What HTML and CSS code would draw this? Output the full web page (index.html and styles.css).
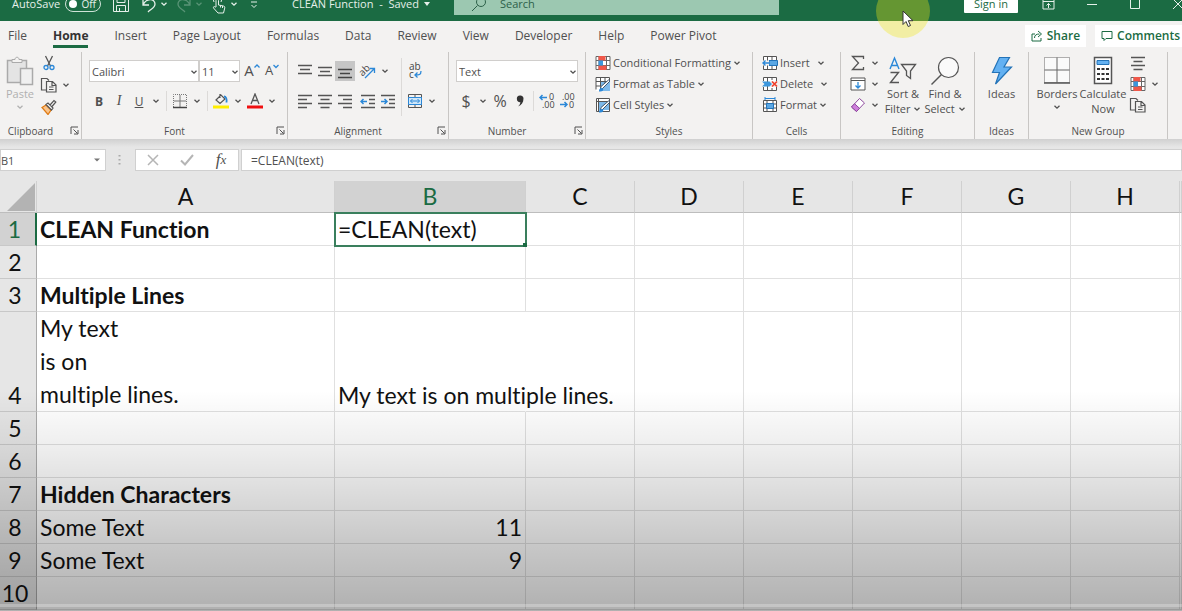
FILE: index.html
```html
<!DOCTYPE html>
<html lang="en">
<head>
  <meta charset="UTF-8">
  <meta name="viewport" content="width=device-width, initial-scale=1.0">
  <title>CLEAN Function - Excel</title>
  <link rel="stylesheet" href="styles.css">
</head>
<body>
  <!-- Shared icons -->
  <svg class="sprite" aria-hidden="true">
    <symbol id="chev" viewBox="0 0 8 8"><path d="M1.500 2.800 4 5.200 6.500 2.800" fill="none" stroke="currentColor" stroke-width="1.300"/></symbol>
    <symbol id="launch" viewBox="0 0 9 9"><path d="M1 8V1h7M3.500 3.500l4 4M8 4v4H4" fill="none" stroke="currentColor"/></symbol>
    <symbol id="cond" viewBox="0 0 16 16"><path d="M1 1.500h14v13H1zM1 5.500h14M1 10.500h14M4 1v14M11.500 1v14" fill="#fff" stroke="#666"/><path d="M3.500 1h7v4.500h-7zM3.500 10.500h8V15h-8z" fill="#f0584a"/><path d="M3.500 5.500H8v5H3.500z" fill="#3b97dd"/></symbol>
    <symbol id="copy" viewBox="0 0 18 16"><path d="M6 13H1.500V1.500H7L9 3.500M6.500 4.500h6l3.500 3.500v7H6.500zM12 4.500V8.500h4M9 10h4.500M9 12.500h4.500" fill="none" stroke="#555" stroke-width="1.200"/></symbol>
  </svg>

  <header class="titlebar">
    <label class="autosave">AutoSave
      <input type="checkbox" class="switch" aria-label="AutoSave">
      <span class="switch-text">Off</span>
    </label>
    <div class="quick">
      <button aria-label="Save"><svg width="18" height="18" viewBox="0 0 18 18"><path d="M1.500 1.500h13l2 2v13h-15zM5 1.500v6h8v-6M4.500 16.500v-6h9v6M7.500 16v-3" /></svg></button>
      <button aria-label="Undo" class="undo"><svg width="16" height="18" viewBox="0 0 16 18"><path d="M2 4v6h6M2 10C5 3 14 3 14 9c0 4-4 5-7 8" stroke-width="1.300"/></svg></button>
      <button class="drop" aria-label="Undo list"><svg width="8" height="8"><use href="#chev"/></svg></button>
      <button aria-label="Redo" class="faded"><svg width="16" height="18" viewBox="0 0 16 18"><path d="M14 4v6H8M14 10C11 3 2 3 2 9c0 4 4 5 7 8" stroke-width="1.300"/></svg></button>
      <button class="drop faded" aria-label="Redo list"><svg width="8" height="8"><use href="#chev"/></svg></button>
      <button aria-label="Touch mode"><svg width="16" height="20" viewBox="0 0 16 20"><path d="M5 13V6.500c0-2 2.500-2 2.500 0V11l5 1c1.500.4 1.500 1.500 1 3l-1 4H7l-4.500-5c-.5-1.500 1-2 2.500-.5M3 8a4 4 0 1 1 7 0M9.500 11.500v2M11.500 12v2" /></svg></button>
      <button class="drop" aria-label="Touch list"><svg width="8" height="8"><use href="#chev"/></svg></button>
      <button aria-label="Customize toolbar" class="custom"><svg width="8" height="10" viewBox="0 0 8 10"><path d="M1 3h6M1.500 6 4 8.500 6.500 6" /></svg></button>
    </div>
    <button class="doc-title">CLEAN Function&nbsp; -&nbsp; Saved <svg width="6" height="4" viewBox="0 0 6 4"><path class="solid" d="M0 0h6L3 4z"/></svg></button>
    <div class="search">
      <svg width="16" height="16" viewBox="0 0 16 16"><circle cx="10" cy="6" r="4.500"/><path d="M6.500 9.500 1 15"/></svg>
      <input type="search" placeholder="Search" aria-label="Search">
    </div>
    <div class="window">
      <button class="signin">Sign in</button>
      <button aria-label="Ribbon display"><svg width="13" height="12" viewBox="0 0 13 12"><path d="M1 1h11v10H1zM1 3.500h11M6.500 10V5.500M4.500 7.500l2-2 2 2"/></svg></button>
      <button aria-label="Minimize"><svg width="12" height="12" viewBox="0 0 12 12"><path d="M1 6.500h10"/></svg></button>
      <button aria-label="Maximize"><svg width="12" height="12" viewBox="0 0 12 12"><path d="M1.500 1.500h9v9h-9z"/></svg></button>
      <button aria-label="Close"><svg width="12" height="12" viewBox="0 0 12 12"><path d="m1 1 10 10M11 1 1 11"/></svg></button>
    </div>
  </header>

  <nav class="tabs">
    <a href="#file">File</a>
    <a href="#home" class="active">Home</a>
    <a href="#insert">Insert</a>
    <a href="#layout">Page Layout</a>
    <a href="#formulas">Formulas</a>
    <a href="#data">Data</a>
    <a href="#review">Review</a>
    <a href="#view">View</a>
    <a href="#developer">Developer</a>
    <a href="#help">Help</a>
    <a href="#pivot">Power Pivot</a>
    <div class="tab-actions">
      <button><svg width="12" height="12" viewBox="0 0 12 12"><path d="M4 4H1v7h9V8M3.500 8c0-3 2-4 5-4M7 1l3.500 3L7 7"/></svg>Share</button>
      <button><svg width="12" height="12" viewBox="0 0 12 12"><path d="M1 1.500h10v7H5L3 10.500v-2H1z"/></svg>Comments</button>
    </div>
  </nav>

  <section class="ribbon">
    <div class="group clipboard">
      <div class="group-body">
        <button class="big disabled" disabled>
          <svg width="28" height="30" viewBox="0 0 28 30"><path d="M1.500 4.500h19v22h-19z" fill="#e4e4e4" stroke="#aaa" stroke-width="1.500"/><path d="M6 6.500V3.500h3c0-3 4-3 4 0h3v3z" fill="#f3f2f1" stroke="#aaa"/><path d="M14.500 12.500h12v16h-12z" fill="#f0f0f0" stroke="#aaa" stroke-width="1.500"/></svg>
          Paste
          <svg width="8" height="8"><use href="#chev"/></svg>
        </button>
        <div class="stack">
          <div class="row"><button class="ico" aria-label="Cut"><svg width="12" height="16" viewBox="0 0 12 16"><path d="m2.500 1 5 10M9.500 1l-5 10" stroke="#555" stroke-width="1.300"/><circle cx="3" cy="12.500" r="2" stroke="#2b88d8" stroke-width="1.300"/><circle cx="9" cy="12.500" r="2" stroke="#2b88d8" stroke-width="1.300"/></svg></button></div>
          <div class="row"><button class="ico" aria-label="Copy"><svg width="18" height="16"><use href="#copy"/></svg></button><button class="drop" aria-label="Copy options"><svg width="8" height="8"><use href="#chev"/></svg></button></div>
          <div class="row"><button class="ico" aria-label="Format painter"><svg width="16" height="16" viewBox="0 0 16 16"><path d="M1 8.500 5 6l5 5-3 4.500z" fill="#f9c48c" stroke="#e07b14" stroke-width="1.300"/><path d="m5 5.500 2-1.500 5 5-1.500 2zM9 6l4-4.500 1.800 1.500L11 7.500" fill="#fff" stroke="#555" stroke-width="1.200"/></svg></button></div>
        </div>
      </div>
      <div class="group-label launches">Clipboard<button aria-label="Clipboard settings"><svg width="9" height="9"><use href="#launch"/></svg></button></div>
    </div>

    <div class="group font">
      <div class="group-body lines">
        <div class="row">
          <span class="combo combo-font"><select aria-label="Font"><option>Calibri</option></select><svg width="8" height="8"><use href="#chev"/></svg></span>
          <span class="combo combo-size"><select aria-label="Font size"><option>11</option></select><svg width="8" height="8"><use href="#chev"/></svg></span>
          <button class="ico grow" aria-label="Increase font size">A<svg width="6" height="8" viewBox="0 0 6 8"><path d="M.5 6.500 3 4l2.500 2.500" stroke="#2b88d8" stroke-width="1.300"/></svg></button>
          <button class="ico shrink" aria-label="Decrease font size">A<svg width="6" height="8" viewBox="0 0 6 8"><path d="M.5 4 3 6.500 5.500 4" stroke="#2b88d8" stroke-width="1.300"/></svg></button>
        </div>
        <div class="row">
          <button class="ico bold">B</button>
          <button class="ico italic">I</button>
          <button class="ico underline">U</button>
          <button class="drop" aria-label="Underline options"><svg width="8" height="8"><use href="#chev"/></svg></button>
          <span class="sep"></span>
          <button class="ico" aria-label="Borders"><svg width="16" height="16" viewBox="0 0 16 16"><path d="M1.500 14V1.500h13V14" stroke="#777" stroke-dasharray="1 1"/><path d="M8 2v12M2 8h12" stroke="#777"/><path d="M1 14.500h14" stroke="#444" stroke-width="1.500"/></svg></button>
          <button class="drop" aria-label="Border options"><svg width="8" height="8"><use href="#chev"/></svg></button>
          <span class="sep"></span>
          <button class="ico" aria-label="Fill color"><svg width="16" height="16" viewBox="0 0 16 16"><path d="m3 7 5-5 4 4-5 4.500zM7 1v4" stroke="#555" stroke-width="1.200"/><path d="M11 3.500c2 0 3 2 2.500 6" stroke="#2b88d8" stroke-width="1.800"/><path d="M0 12.500h16v3H0z" fill="#ffee00"/></svg></button>
          <button class="drop" aria-label="Fill options"><svg width="8" height="8"><use href="#chev"/></svg></button>
          <button class="ico" aria-label="Font color"><svg width="16" height="16" viewBox="0 0 16 16"><path d="m4 11 4-10 4 10M5.500 7.500h5" stroke="#555" stroke-width="1.300"/><path d="M0 12.500h16v3H0z" fill="#f01010"/></svg></button>
          <button class="drop" aria-label="Font color options"><svg width="8" height="8"><use href="#chev"/></svg></button>
        </div>
      </div>
      <div class="group-label launches">Font<button aria-label="Font settings"><svg width="9" height="9"><use href="#launch"/></svg></button></div>
    </div>

    <div class="group alignment">
      <div class="group-body">
        <div class="lines">
          <div class="row">
            <button class="ico" aria-label="Top align"><svg width="16" height="16" viewBox="0 0 16 16"><path d="M1 2.500h14M3 6.500h10M1 10.500h14" stroke="#555" stroke-width="1.300"/></svg></button>
            <button class="ico" aria-label="Middle align"><svg width="16" height="16" viewBox="0 0 16 16"><path d="M1 4.500h14M3 8.500h10M1 12.500h14" stroke="#555" stroke-width="1.300"/></svg></button>
            <button class="ico pressed" aria-label="Bottom align"><svg width="16" height="16" viewBox="0 0 16 16"><path d="M1 6.500h14M3 10.500h10M1 14.500h14" stroke="#444" stroke-width="1.300"/></svg></button>
            <button class="ico orient" aria-label="Orientation"><svg width="18" height="18" viewBox="0 0 18 18"><text x="0" y="12" transform="rotate(-45 5 9)" font-size="10" fill="#444">ab</text><path d="M6 16 15 7M11 6.500h4.500V11" stroke="#2b88d8" stroke-width="1.300"/></svg></button>
            <button class="drop" aria-label="Orientation options"><svg width="8" height="8"><use href="#chev"/></svg></button>
          </div>
          <div class="row">
            <button class="ico" aria-label="Align left"><svg width="16" height="16" viewBox="0 0 16 16"><path d="M1 2.500h14M1 6.500h9M1 10.500h14M1 14.500h9" stroke="#555" stroke-width="1.300"/></svg></button>
            <button class="ico" aria-label="Center"><svg width="16" height="16" viewBox="0 0 16 16"><path d="M1 2.500h14M3.500 6.500h9M1 10.500h14M3.500 14.500h9" stroke="#555" stroke-width="1.300"/></svg></button>
            <button class="ico" aria-label="Align right"><svg width="16" height="16" viewBox="0 0 16 16"><path d="M1 2.500h14M6 6.500h9M1 10.500h14M6 14.500h9" stroke="#555" stroke-width="1.300"/></svg></button>
            <button class="ico orient" aria-label="Decrease indent"><svg width="16" height="16" viewBox="0 0 16 16"><path d="M1 2.500h14M9 6.500h6M9 10.500h6M1 14.500h14" stroke="#555" stroke-width="1.300"/><path d="M1 8.500h6M3.500 6 1 8.500 3.500 11" stroke="#2b88d8" stroke-width="1.500"/></svg></button>
            <button class="ico" aria-label="Increase indent"><svg width="16" height="16" viewBox="0 0 16 16"><path d="M1 2.500h14M9 6.500h6M9 10.500h6M1 14.500h14" stroke="#555" stroke-width="1.300"/><path d="M1 8.500h6M4.500 6 7 8.500 4.500 11" stroke="#2b88d8" stroke-width="1.500"/></svg></button>
          </div>
        </div>
        <span class="sep tall"></span>
        <div class="lines">
          <div class="row"><button class="ico" aria-label="Wrap text"><svg width="16" height="18" viewBox="0 0 16 18"><text x="2" y="8" font-size="10" fill="#444">ab</text><text x="2" y="16" font-size="10" fill="#444">c</text><path d="M14 9c0 4-2 4-6 4M10.500 10.500 8 13l2.500 2.500" stroke="#2b88d8" stroke-width="1.300"/></svg></button></div>
          <div class="row"><button class="ico" aria-label="Merge"><svg width="16" height="16" viewBox="0 0 16 16"><path d="M1.500 1.500h13v13h-13zM8 1.500v3M8 11.500v3" stroke="#555"/><path d="M1.500 4.500h13v7h-13z" fill="#cfe6f8" stroke="#2b88d8"/><path d="M3.500 8h9M5.500 6l-2 2 2 2M10.500 6l2 2-2 2" stroke="#2b88d8"/></svg></button><button class="drop" aria-label="Merge options"><svg width="8" height="8"><use href="#chev"/></svg></button></div>
        </div>
      </div>
      <div class="group-label launches">Alignment<button aria-label="Alignment settings"><svg width="9" height="9"><use href="#launch"/></svg></button></div>
    </div>

    <div class="group number">
      <div class="group-body lines">
        <div class="row"><span class="combo combo-format"><select aria-label="Number format"><option>Text</option></select><svg width="8" height="8"><use href="#chev"/></svg></span></div>
        <div class="row">
          <button class="ico sign">$</button>
          <button class="drop" aria-label="Currency options"><svg width="8" height="8"><use href="#chev"/></svg></button>
          <button class="ico sign">%</button>
          <button class="ico" aria-label="Comma style"><svg width="10" height="14" viewBox="0 0 10 14"><path d="M5 1.500a3 3 0 0 1 3.500 3C8.500 8.500 6.500 11 3 12.500c1.500-1.500 2.300-2.800 2.400-4.300A3.200 3.200 0 1 1 5 1.500z" fill="#333"/></svg></button>
          <span class="sep"></span>
          <button class="ico" aria-label="Increase decimal"><svg width="16" height="16" viewBox="0 0 16 16"><text x="10" y="7" font-size="9" fill="#444">0</text><text x="3" y="15" font-size="9" fill="#444">.00</text><path d="M1 4.500h7M3.500 2 1 4.500 3.500 7" stroke="#2b88d8" stroke-width="1.500"/></svg></button>
          <button class="ico" aria-label="Decrease decimal"><svg width="16" height="16" viewBox="0 0 16 16"><text x="3" y="7" font-size="9" fill="#444">.00</text><text x="10" y="15" font-size="9" fill="#444">0</text><path d="M1 11.500h7M5.500 9 8 11.500 5.500 14" stroke="#2b88d8" stroke-width="1.500"/></svg></button>
        </div>
      </div>
      <div class="group-label launches">Number<button aria-label="Number settings"><svg width="9" height="9"><use href="#launch"/></svg></button></div>
    </div>

    <div class="group styles">
      <div class="group-body stack">
        <button class="cmd"><svg width="16" height="16"><use href="#cond"/></svg>Conditional Formatting<svg width="8" height="8"><use href="#chev"/></svg></button>
        <button class="cmd"><svg width="16" height="16" viewBox="0 0 16 16"><path d="M1 1h14v14H1z" fill="#fff"/><path d="M5.500 5.500H15V15H5.500z" fill="#7db9ea"/><path d="M1 13.500V1.500h13.500V6M1 5.500h13M1 10h5M5.500 1v13M10 1v7" stroke="#555"/><path d="M15 5 8 12l-3 3 1-4.500L13.500 4z" fill="#fff" stroke="#41566b"/><path d="M4 15.500c0-3 2-4.500 4-3 1 2-1 3.500-4 3z" fill="#2b88d8"/></svg>Format as Table<svg width="8" height="8"><use href="#chev"/></svg></button>
        <button class="cmd"><svg width="16" height="16" viewBox="0 0 16 16"><path d="M1 1h14v14H1z" fill="#fff"/><path d="M3.500 4.500H14V13H3.500z" fill="#7db9ea"/><path d="M1.500 14.500v-13h13v13zM1 4.500h14M3.500 1v13" stroke="#555"/><path d="M15 5 8 12l-3 3 1-4.500L13.500 4z" fill="#fff" stroke="#41566b"/><path d="M4 15.500c0-3 2-4.500 4-3 1 2-1 3.500-4 3z" fill="#2b88d8"/></svg>Cell Styles<svg width="8" height="8"><use href="#chev"/></svg></button>
      </div>
      <div class="group-label">Styles</div>
    </div>

    <div class="group cells">
      <div class="group-body stack">
        <button class="cmd spaced"><svg width="16" height="16" viewBox="0 0 16 16"><path d="M1.500 1.500h13v13h-13zM5.500 1v14M10 1v14" fill="#fff" stroke="#555"/><path d="M7 5.500h8.500v5H7z" fill="#5aa7e4" stroke="#2373b8"/><path d="M0 5.500h7v5H0z" fill="#f3f2f1"/><path d="M1 8h6M3.500 5.500 1 8l2.500 2.500" stroke="#2b88d8" stroke-width="1.400"/></svg>Insert<svg width="8" height="8"><use href="#chev"/></svg></button>
        <button class="cmd spaced"><svg width="16" height="16" viewBox="0 0 16 16"><path d="M1.500 5V1.500h13V5M1.500 11v3.500h13V11M5.500 1v14M10 1v3M10 12v3" fill="#fff" stroke="#555"/><path d="M0 5.500h7.500L10 8l-2.500 2.500H0L2.500 8z" fill="#3b97dd"/><path d="m10 5.500 5 5M15 5.500l-5 5" stroke="#f0402c" stroke-width="1.700"/></svg>Delete<svg width="8" height="8"><use href="#chev"/></svg></button>
        <button class="cmd"><svg width="16" height="16" viewBox="0 0 16 16"><path d="M1.500 3.500h13v11h-13zM1 7h14M1 11h14M5 3v12M11 3v12" fill="#fff" stroke="#555"/><path d="M4.500 6.500h7v5h-7z" fill="#5aa7e4" stroke="#2373b8"/><path d="M3 1.500h10M3 0v3M13 0v3" stroke="#2b88d8"/></svg>Format<svg width="8" height="8"><use href="#chev"/></svg></button>
      </div>
      <div class="group-label">Cells</div>
    </div>

    <div class="group editing">
      <div class="group-body">
        <div class="stack tight">
          <div class="row"><button class="ico" aria-label="AutoSum"><svg width="14" height="16" viewBox="0 0 14 16"><path d="M12.500 4V1.500h-11L7.500 8l-6 6.500h11V12" stroke="#555" stroke-width="1.300"/></svg></button><button class="drop" aria-label="Sum options"><svg width="8" height="8"><use href="#chev"/></svg></button></div>
          <div class="row"><button class="ico" aria-label="Fill"><svg width="16" height="14" viewBox="0 0 16 14"><path d="M1 1h14v12H1zM1 3.500h14" fill="#fff" stroke="#555"/><path d="M8 5v6M5.500 8.500 8 11l2.500-2.500" stroke="#2b88d8" stroke-width="1.300"/></svg></button><button class="drop" aria-label="Fill options"><svg width="8" height="8"><use href="#chev"/></svg></button></div>
          <div class="row"><button class="ico" aria-label="Clear"><svg width="16" height="16" viewBox="0 0 16 16"><path d="M9.500 1.500 14.500 6l-8 8.500L1.500 10z" fill="#fff" stroke="#8e4a9e"/><path d="m4.500 6.700 5 4.600-3 3.200L1.500 10z" fill="#cf7fdc" stroke="#8e4a9e"/></svg></button><button class="drop" aria-label="Clear options"><svg width="8" height="8"><use href="#chev"/></svg></button></div>
        </div>
        <button class="big">
          <svg width="30" height="30" viewBox="0 0 30 30"><path d="M2 13 6.500 2 11 13M3.500 9.500h6" stroke="#2b88d8" stroke-width="1.400"/><path d="M2.500 16.500h8l-8 10h8.500" stroke="#555" stroke-width="1.400"/><path d="M13.500 8.500h14l-5 6.500v7.500l-4-3V15z" stroke="#555" stroke-width="1.300"/></svg>
          Sort &amp;<br><span>Filter <svg width="8" height="8"><use href="#chev"/></svg></span>
        </button>
        <button class="big">
          <svg width="30" height="30" viewBox="0 0 30 30"><circle cx="18.500" cy="11.500" r="10" fill="#fafafa" stroke="#555" stroke-width="1.200"/><path d="M11.500 18.500 1.500 28.500" stroke="#555" stroke-width="1.500"/></svg>
          Find &amp;<br><span>Select <svg width="8" height="8"><use href="#chev"/></svg></span>
        </button>
      </div>
      <div class="group-label">Editing</div>
    </div>

    <div class="group ideas">
      <div class="group-body">
        <button class="big">
          <svg width="22" height="30" viewBox="0 0 22 30"><path d="M8.500 1.500h10L13 11h7.500L4.500 28l4-11.500h-7z" fill="#63b1f2" stroke="#2373b8" stroke-width="1.200"/></svg>
          Ideas
        </button>
      </div>
      <div class="group-label">Ideas</div>
    </div>

    <div class="group new-group">
      <div class="group-body">
        <button class="big">
          <svg width="28" height="30" viewBox="0 0 28 30"><path d="M1.500 1.500h25v25h-25z" fill="#fafafa" stroke="#666" stroke-dasharray="1 1"/><path d="M14 1.500v25M1.500 14h25" stroke="#666"/><path d="M1 27h26" stroke="#555" stroke-width="1.500"/></svg>
          Borders
          <svg width="8" height="8"><use href="#chev"/></svg>
        </button>
        <button class="big">
          <svg width="20" height="30" viewBox="0 0 20 30"><path d="M1.500 1.500h17v26h-17z" fill="#fff" stroke="#555" stroke-width="1.500"/><path d="M4 4.500h12v4H4z" fill="#63b1f2" stroke="#2373b8"/><path d="M4 12h3v2H4zM8.500 12h3v2h-3zM13 12h3v2h-3zM4 17h3v2H4zM8.500 17h3v2h-3zM13 17h3v2h-3zM4 22h3v2H4zM8.500 22h3v2h-3zM13 22h3v2h-3z" fill="#333"/></svg>
          Calculate<br>Now
        </button>
        <div class="stack tight">
          <div class="row"><button class="ico" aria-label="Center"><svg width="16" height="16" viewBox="0 0 16 16"><path d="M1 2.500h14M3.500 6.500h9M1 10.500h14M3.500 14.500h9" stroke="#555" stroke-width="1.300"/></svg></button></div>
          <div class="row"><button class="ico" aria-label="Conditional formatting"><svg width="16" height="16"><use href="#cond"/></svg></button><button class="drop" aria-label="More formatting"><svg width="8" height="8"><use href="#chev"/></svg></button></div>
          <div class="row"><button class="ico" aria-label="Copy"><svg width="18" height="16"><use href="#copy"/></svg></button></div>
        </div>
      </div>
      <div class="group-label">New Group</div>
    </div>
  </section>

  <section class="formula-bar">
    <div class="name-box">
      <input type="text" value="B1" aria-label="Name box">
      <svg width="6" height="4" viewBox="0 0 6 4"><path d="M0 .5h6L3 3.500z" fill="#777"/></svg>
    </div>
    <svg class="grip" width="3" height="12" viewBox="0 0 3 12"><path d="M.5 1h2v1.500h-2zM.5 5h2v1.500h-2zM.5 9h2v1.500h-2z" fill="#aaa"/></svg>
    <div class="entry">
      <button aria-label="Cancel"><svg width="12" height="12" viewBox="0 0 12 12"><path d="m1 1 10 10M11 1 1 11" stroke="#b5b5b5" stroke-width="1.500"/></svg></button>
      <button aria-label="Enter"><svg width="14" height="12" viewBox="0 0 14 12"><path d="m1 6.500 4 4L13 1" stroke="#b5b5b5" stroke-width="2"/></svg></button>
      <button class="fx" aria-label="Insert function">f<small>x</small></button>
    </div>
    <input class="formula" type="text" value="=CLEAN(text)" aria-label="Formula">
  </section>

  <main class="sheet">
    <table>
      <colgroup><col class="col-head"><col class="col-a"><col class="col-b"><col class="col-n"><col class="col-n"><col class="col-n"><col class="col-n"><col class="col-n"><col class="col-n"><col></colgroup>
      <thead>
        <tr><th class="corner"><svg width="28" height="28" viewBox="0 0 28 28"><path d="M28 0v28H0z" fill="#b3b3b3"/></svg></th><th>A</th><th class="current">B</th><th>C</th><th>D</th><th>E</th><th>F</th><th>G</th><th>H</th><th></th></tr>
      </thead>
      <tbody>
        <tr><th class="current">1</th><td class="strong">CLEAN Function</td><td class="selected">=CLEAN(text)<i class="handle"></i></td><td></td><td></td><td></td><td></td><td></td><td></td><td></td></tr>
        <tr><th>2</th><td></td><td></td><td></td><td></td><td></td><td></td><td></td><td></td><td></td></tr>
        <tr><th>3</th><td class="strong">Multiple Lines</td><td></td><td></td><td></td><td></td><td></td><td></td><td></td><td></td></tr>
        <tr><th>4</th><td class="multi">My text<br>is on<br>multiple lines.</td><td class="spill">My text is on multiple lines.</td><td></td><td></td><td></td><td></td><td></td><td></td><td></td></tr>
        <tr><th>5</th><td></td><td></td><td></td><td></td><td></td><td></td><td></td><td></td><td></td></tr>
        <tr><th>6</th><td></td><td></td><td></td><td></td><td></td><td></td><td></td><td></td><td></td></tr>
        <tr><th>7</th><td class="strong">Hidden Characters</td><td></td><td></td><td></td><td></td><td></td><td></td><td></td><td></td></tr>
        <tr><th>8</th><td>Some Text</td><td class="num">11</td><td></td><td></td><td></td><td></td><td></td><td></td><td></td></tr>
        <tr><th>9</th><td>Some T&zwnj;ext</td><td class="num">9</td><td></td><td></td><td></td><td></td><td></td><td></td><td></td></tr>
        <tr><th>10</th><td></td><td></td><td></td><td></td><td></td><td></td><td></td><td></td><td></td></tr>
      </tbody>
    </table>
  </main>

  <!-- Player shade and progress track -->
  <div class="shade"><div class="track"></div></div>

  <!-- Highlighted mouse pointer -->
  <div class="pointer">
    <svg width="12" height="18" viewBox="0 0 12 18"><path d="M1 1v13.500l3-3 2.200 5 2.300-1-2.200-4.800H11z" fill="#fff" stroke="#333"/></svg>
  </div>
</body>
</html>
```

FILE: styles.css
```css
* {
  margin: 0;
  padding: 0;
  box-sizing: border-box;
}

:root {
  --green: #1b6b43;
  --ribbon: #f3f2f1;
  --head: #e6e6e6;
  --line: #e0e0e0;
  --text: #505050;
}

body {
  font-family: 'Open Sans', 'Noto Sans', sans-serif;
  font-size: 11px;
  color: var(--text);
  background: #fff;
  height: 100vh;
  overflow: hidden;
  position: relative;
}

button {
  font: inherit;
  color: inherit;
  background: none;
  border: none;
  display: inline-flex;
  align-items: center;
  justify-content: center;
  white-space: nowrap;
}

input,
select {
  font: inherit;
  color: inherit;
  border: none;
  outline: none;
}

a {
  color: inherit;
  text-decoration: none;
}

svg {
  fill: none;
  flex: none;
}

.sprite {
  display: none;
}

/* Title bar */
.titlebar {
  display: flex;
  align-items: center;
  height: 35px;
  margin-top: -14px;
  background: var(--green);
  color: #e6f0ea;
}

.titlebar svg {
  stroke: currentColor;
}

.titlebar .solid {
  fill: currentColor;
  stroke: none;
}

.autosave {
  display: flex;
  align-items: center;
  position: relative;
  padding-left: 12px;
  gap: 5px;
}

.switch {
  appearance: none;
  width: 36px;
  height: 16px;
  border: 1px solid #cfe3d8;
  border-radius: 8px;
}

.switch::before {
  content: '';
  display: block;
  width: 8px;
  height: 8px;
  margin: 3px;
  border-radius: 50%;
  background: #fff;
}

.switch-text {
  position: absolute;
  right: 5px;
  font-size: 10px;
}

.quick {
  display: flex;
  align-items: center;
  margin-left: 11px;
}

.quick .undo {
  margin-left: 11px;
}

.quick .drop {
  margin-right: 5px;
}

.quick .custom {
  margin-left: 4px;
}

.faded {
  opacity: 0.3;
}

.doc-title {
  margin-left: 34px;
  gap: 5px;
}

.search {
  flex: 0 1 325px;
  display: flex;
  align-items: center;
  gap: 13px;
  height: 23px;
  margin-left: 24px;
  padding-left: 17px;
  background: #9cc8b1;
  color: #2d6149;
}

.search input {
  flex: 1;
  min-width: 0;
  background: none;
}

.search input::placeholder {
  color: #2d6149;
}

.window {
  display: flex;
  align-items: center;
  gap: 31px;
  margin-left: auto;
  margin-right: -2px;
}

.signin {
  width: 54px;
  height: 19px;
  margin-right: -7px;
  background: #fff;
  color: var(--green);
  border-radius: 1px;
}

/* Tabs */
.tabs {
  display: flex;
  align-items: center;
  gap: 26px;
  height: 29px;
  padding-left: 8px;
  background: var(--ribbon);
  font-size: 12px;
  white-space: nowrap;
}

.tabs a {
  line-height: 18px;
  padding-top: 3px;
  border-bottom: 3px solid transparent;
}

.tabs a.active {
  font-weight: 700;
  color: #333;
  border-color: var(--green);
}

.tab-actions {
  display: flex;
  gap: 9px;
  margin-left: auto;
}

.tab-actions button {
  gap: 4px;
  height: 22px;
  padding: 0 6px;
  background: #fff;
  color: var(--green);
  font-weight: 600;
}

.tab-actions button:last-child {
  padding-right: 2px;
}

.tab-actions svg {
  stroke: currentColor;
}

/* Ribbon */
.ribbon {
  display: flex;
  height: 89px;
  padding-top: 2px;
  background: var(--ribbon);
}

.group {
  flex: none;
  display: flex;
  flex-direction: column;
  padding-bottom: 1px;
  border-right: 1px solid #c8c6c4;
}

.group-body {
  flex: 1;
  display: flex;
}

.group-label {
  position: relative;
  height: 14px;
  line-height: 14px;
  font-size: 10px;
  text-align: center;
}

.group-label.launches {
  padding-right: 20px;
}

.group-label button {
  position: absolute;
  right: 2px;
  top: 2px;
}

.row {
  display: flex;
  align-items: center;
  height: 22px;
}

.tight .row {
  height: 21px;
}

.lines {
  display: flex;
  flex-direction: column;
  gap: 8px;
  padding-top: 8px;
}

.group-body.stack,
.stack {
  display: flex;
  flex-direction: column;
}

.ico {
  width: 20px;
  height: 20px;
}

.drop {
  width: 14px;
  height: 20px;
}

.sep {
  width: 1px;
  height: 20px;
  margin: 0 3px;
  background: #dcdad8;
}

.sep.tall {
  height: 58px;
  margin-top: 6px;
}

.pressed {
  background: #c6c6c6;
}

.orient {
  margin-left: 3px;
}

.big {
  flex-direction: column;
  justify-content: flex-start;
  line-height: 15px;
  padding-top: 4px;
}

.big > svg + svg {
  margin-top: 2px;
}

.disabled {
  color: #b0b0b0;
}

.cmd {
  height: 21px;
  gap: 2px;
  justify-content: flex-start;
}

.cmd.spaced svg:last-child {
  margin-left: 5px;
}

.combo {
  position: relative;
}

.combo select {
  appearance: none;
  width: 100%;
  height: 22px;
  padding-left: 2px;
  background: #fff;
  border: 1px solid #d0cecc;
}

.combo svg {
  position: absolute;
  right: 1px;
  top: 8px;
}

.clipboard {
  width: 82px;
}

.clipboard .group-body {
  padding-left: 1px;
}

.clipboard .big {
  width: 38px;
}

.font {
  width: 206px;
}

.font .group-body,
.alignment .group-body,
.number .group-body,
.editing .group-body {
  padding-left: 7px;
}

.combo-font {
  width: 110px;
}

.combo-size {
  width: 41px;
}

.grow,
.shrink {
  align-items: flex-start;
  font-size: 15px;
  line-height: 18px;
}

.grow {
  margin-left: 2px;
}

.shrink {
  font-size: 13px;
}

.bold {
  font-weight: 700;
  font-size: 12px;
}

.italic {
  font-family: 'Liberation Serif', serif;
  font-style: italic;
  font-size: 14px;
}

.underline {
  text-decoration: underline;
  font-size: 12px;
}

.alignment {
  width: 161px;
}

.number {
  width: 137px;
}

.combo-format {
  width: 122px;
}

.sign {
  font-size: 16px;
}

.styles {
  width: 167px;
}

.cells {
  width: 88px;
}

.styles .group-body,
.cells .group-body {
  padding-left: 9px;
}

.editing {
  width: 134px;
}

.editing .big {
  width: 42px;
}

.ideas {
  width: 54px;
}

.ideas .big {
  flex: 1;
}

.new-group {
  width: 139px;
}

.new-group .group-body {
  padding-left: 5px;
}

.new-group .big {
  width: 46px;
}

.new-group .stack {
  margin-left: 2px;
}

/* Formula bar */
.formula-bar {
  display: flex;
  align-items: center;
  height: 42px;
  background: linear-gradient(#d0d0d0, var(--head) 8px);
}

.name-box,
.entry,
.formula {
  height: 22px;
  background: #fff;
  border: 1px solid #d0d0d0;
}

.name-box {
  display: flex;
  align-items: center;
  width: 106px;
  padding-right: 5px;
}

.name-box input {
  flex: 1;
  min-width: 0;
}

.grip {
  margin: 0 14px 0 12px;
}

.entry {
  display: flex;
  width: 104px;
}

.entry button {
  flex: 1;
}

.entry .fx {
  font-family: 'Liberation Serif', serif;
  font-style: italic;
  font-size: 17px;
}

.fx small {
  font-size: 13px;
}

.formula {
  flex: 1;
  margin-left: 2px;
  padding-left: 9px;
  font-size: 12px;
}

/* Sheet */
.sheet {
  background: #fff;
  font-family: Lato, 'Open Sans', sans-serif;
  font-size: 23px;
  font-variant-ligatures: none;
  color: #111;
}

table {
  width: 100%;
  table-layout: fixed;
  border-collapse: separate;
  border-spacing: 0;
}

.col-head {
  width: 37px;
}

.col-a {
  width: 298px;
}

.col-b {
  width: 191px;
}

.col-n {
  width: 109px;
}

th {
  font-weight: 400;
  background: var(--head);
  border-right: 1px solid #c8c8c8;
}

thead th {
  height: 32px;
  line-height: 31px;
  border-color: #d0d0d0;
  border-bottom: 1px solid #bdbdbd;
}

.corner {
  line-height: 0;
  text-align: right;
  vertical-align: bottom;
  padding: 0 1px 1px 0;
}

tbody th {
  height: 33px;
  line-height: 32px;
  padding-right: 6px;
  vertical-align: bottom;
  border-right-color: #aaa;
  border-bottom: 1px solid #c8c8c8;
}

th.current {
  background: #d2d2d2;
  color: var(--green);
}

tbody th.current {
  border-right: 2px solid var(--green);
}

td {
  line-height: 32px;
  padding-left: 3px;
  vertical-align: bottom;
  white-space: nowrap;
  border-right: 1px solid var(--line);
  border-bottom: 1px solid var(--line);
}

.multi {
  line-height: 33px;
}

.strong {
  font-weight: 700;
}

.num {
  text-align: right;
  padding-right: 3px;
}

.spill {
  border-right-color: transparent;
}

.selected {
  position: relative;
  outline: 2px solid #3a7f5d;
  outline-offset: -1px;
}

.handle {
  position: absolute;
  right: -2px;
  bottom: -2px;
  width: 4px;
  height: 4px;
  background: var(--green);
}

/* Overlays */
.shade {
  position: absolute;
  left: 0;
  right: 0;
  bottom: 0;
  height: 221px;
  pointer-events: none;
  background: linear-gradient(transparent, rgba(0, 0, 0, 0.07) 27%, rgba(0, 0, 0, 0.21) 68%, rgba(0, 0, 0, 0.31));
}

.track {
  position: absolute;
  left: 0;
  right: 0;
  bottom: 4px;
  height: 3px;
  background: rgba(255, 255, 255, 0.25);
}

.pointer {
  position: absolute;
  left: 876px;
  top: -16px;
  width: 54px;
  height: 54px;
  padding: 26px 0 0 26px;
  border-radius: 50%;
  background: rgba(240, 232, 20, 0.35);
  pointer-events: none;
}
```
